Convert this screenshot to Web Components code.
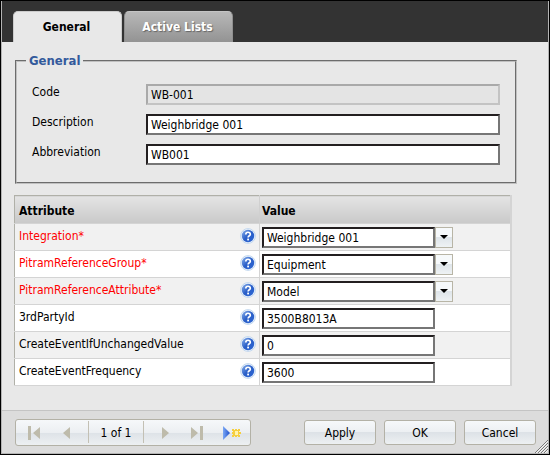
<!doctype html>
<html lang="en">
  <head>
    <meta charset="UTF-8">
    <title>Weighbridge 001</title>
    <style>
      body {
        margin: 0;
        font: 12px/16px "DejaVu Sans Condensed", Tahoma, "Noto Sans", sans-serif;
        color: #000;
      }
    </style>
  </head>
  <body>
    <dialog-window>
      <tab-strip slot="tabs">
        <tab-button selected>General</tab-button>
        <tab-button>Active Lists</tab-button>
      </tab-strip>
      <field-group legend="General">
        <text-field label="Code" value="WB-001" disabled></text-field>
        <text-field label="Description" value="Weighbridge 001"></text-field>
        <text-field label="Abbreviation" value="WB001"></text-field>
      </field-group>
      <attribute-table></attribute-table>
      <record-navigator slot="footer">1 of 1</record-navigator>
      <push-button slot="footer">Apply</push-button>
      <push-button slot="footer">OK</push-button>
      <push-button slot="footer">Cancel</push-button>
    </dialog-window>

    <template id="dialog-window-template">
      <style>
        :host {
          display: flex;
          box-sizing: border-box;
          min-height: 100vh;
          border: 1px solid #000;
        }
        .frame {
          position: relative;
          display: flex;
          flex-direction: column;
          flex: 1;
          border: 1px solid #b4b4b4;
          border-top: 0;
          background: #e8e8e8;
        }
        header {
          padding: 10px 11px 0;
          background: #333;
        }
        main {
          flex: 1;
          padding: 10px 36px 24px 12px;
        }
        footer {
          display: flex;
          align-items: center;
          gap: 8px;
          padding: 8px 12px 7px 13px;
          border-top: 1px solid #c4c4c4;
          background: #dcdcdc;
        }
        .grip {
          position: absolute;
          right: 0;
          bottom: 0;
        }
      </style>
      <div class="frame">
        <header><slot name="tabs"></slot></header>
        <main><slot></slot></main>
        <footer><slot name="footer"></slot></footer>
        <svg class="grip" width="14" height="14" stroke-width="1">
          <path d="M1 14L14 1M4 14L14 4M7 14L14 7M10 14L14 10" stroke="#777" />
          <path d="M2 14L14 2M5 14L14 5M8 14L14 8M11 14L14 11" stroke="#f4f4f4" />
        </svg>
      </div>
    </template>

    <template id="tab-strip-template">
      <style>
        :host {
          display: flex;
          gap: 2px;
        }
      </style>
      <slot></slot>
    </template>

    <template id="tab-button-template">
      <style>
        :host {
          display: block;
          width: 109px;
        }
        button {
          width: 100%;
          height: 31px;
          padding: 0 2px 0 0;
          border: 1px solid #8f8f8f;
          border-top-color: #c4c4c4;
          border-bottom: 0;
          border-radius: 5px 5px 0 0;
          background: linear-gradient(#b8b8b8, #939393);
          font: bold 12px/16px "DejaVu Sans Condensed", Tahoma, sans-serif;
          color: #fff;
          text-shadow: 1px 1px 1px #666;
        }
        :host([selected]) button {
          border-color: #ccc;
          background: #e8e8e8;
          color: #000;
          text-shadow: none;
        }
      </style>
      <button type="button"><slot></slot></button>
    </template>

    <template id="field-group-template">
      <style>
        :host {
          display: block;
          margin: 0 -5px 11px 1px;
        }
        fieldset {
          display: grid;
          gap: 9px;
          margin: 0;
          padding: 14px 15px 17px;
          border: 2px groove #c0c0c0;
        }
        legend {
          margin-left: -6px;
          padding: 0 3px;
          font: bold 13px/18px "DejaVu Sans Condensed", Tahoma, sans-serif;
          color: #335a9c;
        }
      </style>
      <fieldset>
        <legend></legend>
        <slot></slot>
      </fieldset>
    </template>

    <template id="text-field-template">
      <style>
        :host {
          display: flex;
          align-items: flex-start;
        }
        label {
          width: 114px;
        }
        input {
          flex: 1;
          min-width: 0;
          box-sizing: border-box;
          height: 21px;
          padding: 1px 3px 0;
          border: 2px solid;
          border-color: #231f20 #767676 #767676 #231f20;
          background: #fff;
          font: inherit;
          color: #000;
        }
        input:disabled {
          border-color: #a9a9a9 #c3c3c3 #c3c3c3 #a9a9a9;
          background: #e4e4e4;
        }
      </style>
      <label for="field"></label>
      <input id="field" type="text">
    </template>

    <template id="attribute-table-template">
      <style>
        :host {
          display: block;
        }
        table {
          width: 100%;
          border-collapse: collapse;
          table-layout: fixed;
          border: 1px solid #b0b0a8;
          border-right: 2px solid #d4d4d4;
          border-bottom-color: #d4d4d4;
        }
        .name {
          width: 238px;
        }
        th {
          height: 25px;
          padding: 2px 2px 0 4px;
          border-right: 1px solid #d0d0d0;
          background: linear-gradient(#e4e4e4, #c9c9c9);
          text-align: left;
        }
        th:last-child,
        td:last-child {
          padding-left: 2px;
        }
        td {
          height: 26px;
          padding: 0 3px 0 4px;
          border: 1px solid #d4d4d4;
          border-left-width: 0;
        }
        tbody tr {
          background: #fff;
        }
        tbody tr:nth-child(odd) {
          background: #f1f1f1;
        }
        .caption,
        .value {
          display: flex;
        }
        .caption {
          justify-content: space-between;
          padding-bottom: 3px;
        }
        .required {
          color: #f00;
        }
        input,
        select {
          appearance: none;
          box-sizing: border-box;
          width: 173px;
          height: 21px;
          margin: 0;
          padding: 1px 3px 0;
          border: 2px solid;
          border-color: #231f20 #767676 #767676 #231f20;
          border-radius: 0;
          background: #fff;
          font: inherit;
          color: #000;
        }
        .open {
          display: grid;
          place-items: center;
          width: 18px;
          height: 21px;
          padding: 0;
          border: 1px solid #b8b5a6;
          background: linear-gradient(#f6f9fb 50%, #dfe5ea 50%, #eef2f4);
        }
      </style>
      <table>
        <thead>
          <tr><th class="name">Attribute</th><th>Value</th></tr>
        </thead>
        <tbody></tbody>
      </table>
    </template>

    <template id="help-icon-template">
      <style>
        :host {
          display: block;
          width: 16px;
          height: 16px;
        }
        svg {
          display: block;
        }
      </style>
      <svg width="16" height="16" viewBox="0 0 16 16">
        <defs>
          <linearGradient id="ball" x1="0" y1="0" x2="1" y2="1">
            <stop offset="0" stop-color="#8ab2ec" />
            <stop offset=".5" stop-color="#2a5fc8" />
            <stop offset="1" stop-color="#2c66d4" />
          </linearGradient>
        </defs>
        <circle cx="8" cy="8" r="7.4" fill="#eef4fb" stroke="#b5cfec" stroke-width=".8" />
        <circle cx="8" cy="8" r="6.2" fill="url(#ball)" />
        <path d="M5.8 6.4C5.8 3.6 10.3 3.6 10.3 6.2C10.3 7.8 8.1 7.8 8.1 9.6" fill="none" stroke="#fff" stroke-width="1.7" />
        <rect x="7.2" y="10.6" width="1.8" height="1.8" fill="#fff" />
      </svg>
    </template>

    <template id="record-navigator-template">
      <style>
        :host {
          display: flex;
          box-sizing: border-box;
          width: 236px;
          height: 27px;
          margin-right: auto;
          border: 1px solid #b3b1a6;
          border-radius: 3px;
          background: linear-gradient(#f6f8fa, #eceff2 50%, #dde2e7 50%, #edf0f2);
        }
        button {
          display: grid;
          place-items: center;
          flex: 1;
          padding: 0;
          border: 0;
          background: none;
        }
        .group {
          display: flex;
        }
        .back {
          width: 72px;
        }
        .forward {
          flex: 1;
        }
        .position {
          box-sizing: border-box;
          width: 56px;
          margin: 1px 0 2px;
          border: solid #c3c0b4;
          border-width: 0 1px;
          line-height: 24px;
          text-align: center;
        }
      </style>
      <div class="group back">
        <button type="button" aria-label="First">
          <svg width="14" height="14" fill="#bebbab"><path d="M1 0h3v14H1zM13 1v12L6 7z" /></svg>
        </button>
        <button type="button" aria-label="Previous">
          <svg width="14" height="14" fill="#bebbab"><path d="M7 1v12L0 7z" /></svg>
        </button>
      </div>
      <div class="position"><slot></slot></div>
      <div class="group forward">
        <button type="button" aria-label="Next">
          <svg width="14" height="14" fill="#bebbab"><path d="M7 1v12L14 7z" /></svg>
        </button>
        <button type="button" aria-label="Last">
          <svg width="14" height="14" fill="#bebbab"><path d="M10 0h3v14h-3zM1 1v12L8 7z" /></svg>
        </button>
        <button type="button" aria-label="New">
          <svg width="18" height="14">
            <defs>
              <linearGradient id="arrow">
                <stop offset="0" stop-color="#7ba8f5" />
                <stop offset="1" stop-color="#1f50cc" />
              </linearGradient>
            </defs>
            <path d="M0 0v14L7 7z" fill="url(#arrow)" />
            <path d="M9 3h2v1h1V3h2v1h1V3h2v2h-1v1h2v2h-2v1h1v2h-2v-1h-1v1h-2v-1h-1v1H9V9h1V8H9V6h1V5H9z" fill="#f6cf3e" />
            <rect x="12" y="5" width="3" height="4" fill="#fff3ae" />
          </svg>
        </button>
      </div>
    </template>

    <template id="push-button-template">
      <style>
        :host {
          display: block;
          width: 72px;
        }
        button {
          width: 100%;
          height: 25px;
          padding: 0;
          border: 1px solid #b3b1a6;
          border-radius: 3px;
          background: linear-gradient(#f6f8fa, #eceff2 50%, #dde2e7 50%, #edf0f2);
          font: inherit;
          color: #000;
        }
      </style>
      <button type="button"><slot></slot></button>
    </template>

    <script>
      class TemplateElement extends HTMLElement {
        constructor() {
          super()
          const template = document.getElementById(`${this.localName}-template`)
          this.attachShadow({mode: "open"}).append(template.content.cloneNode(true))
        }
      }

      class FieldGroup extends TemplateElement {
        connectedCallback() {
          this.shadowRoot.querySelector("legend").textContent = this.getAttribute("legend")
        }
      }

      class TextField extends TemplateElement {
        connectedCallback() {
          const input = this.shadowRoot.querySelector("input")
          this.shadowRoot.querySelector("label").textContent = this.getAttribute("label")
          input.value = this.getAttribute("value")
          input.disabled = this.hasAttribute("disabled")
        }
      }

      const attributes = [
        {name: "Integration", value: "Weighbridge 001", required: true},
        {name: "PitramReferenceGroup", value: "Equipment", required: true},
        {name: "PitramReferenceAttribute", value: "Model", required: true},
        {name: "3rdPartyId", value: "3500B8013A"},
        {name: "CreateEventIfUnchangedValue", value: "0"},
        {name: "CreateEventFrequency", value: "3600"}
      ]

      class AttributeTable extends TemplateElement {
        connectedCallback() {
          this.shadowRoot.querySelector("tbody").innerHTML = attributes.map(this.row).join("")
          this.shadowRoot.querySelectorAll(".open").forEach(button =>
            button.addEventListener("click", () => button.previousElementSibling.showPicker()))
        }

        row({name, value, required}) {
          const control = required
            ? `<select id="${name}"><option>${value}</option></select>
               <button class="open" type="button" aria-label="Open ${name}">
                 <svg width="8" height="4"><path d="M0 0h8L4 4z" /></svg>
               </button>`
            : `<input id="${name}" type="text" value="${value}">`
          return `
            <tr>
              <td>
                <div class="caption">
                  <label for="${name}" class="${required ? "required" : ""}">${name}${required ? "*" : ""}</label>
                  <help-icon></help-icon>
                </div>
              </td>
              <td><div class="value">${control}</div></td>
            </tr>`
        }
      }

      customElements.define("dialog-window", class extends TemplateElement {})
      customElements.define("tab-strip", class extends TemplateElement {})
      customElements.define("tab-button", class extends TemplateElement {})
      customElements.define("help-icon", class extends TemplateElement {})
      customElements.define("record-navigator", class extends TemplateElement {})
      customElements.define("push-button", class extends TemplateElement {})
      customElements.define("field-group", FieldGroup)
      customElements.define("text-field", TextField)
      customElements.define("attribute-table", AttributeTable)
    </script>
  </body>
</html>
